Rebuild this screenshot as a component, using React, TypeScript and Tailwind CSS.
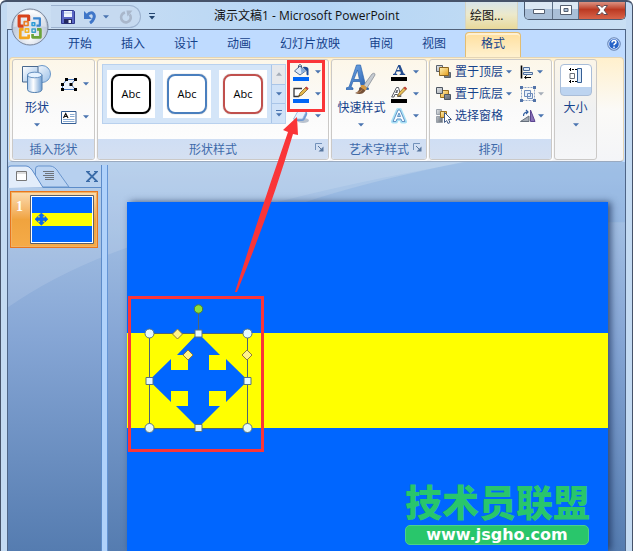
import { ReactNode } from "react";
import clsx from "clsx";

const TABS = ["开始", "插入", "设计", "动画", "幻灯片放映", "审阅", "视图"];

const STYLES = [
  { id: "black", border: "border-black" },
  { id: "blue", border: "border-[#4a7fbe]" },
  { id: "red", border: "border-[#c0504d]" },
];

const Caret = ({ dim = false }: { dim?: boolean }) => (
  <svg viewBox="0 0 6 4" className="h-1 w-1.5 shrink-0">
    <path d="M0 0.3h6L3 3.6z" fill={dim ? "#a5adb8" : "#4a74b0"} />
  </svg>
);

const OfficeLogo = () => (
  <svg viewBox="0 0 38 38" className="h-[38px] w-[38px]">
    <defs>
      <radialGradient id="orb" cx="50%" cy="78%" r="75%">
        <stop offset="0" stopColor="#ffffff" />
        <stop offset="0.45" stopColor="#d3dbe8" />
        <stop offset="0.8" stopColor="#b3bfd1" />
        <stop offset="1" stopColor="#f3f6fa" />
      </radialGradient>
      <linearGradient id="orbTop" x1="0" y1="0" x2="0" y2="1">
        <stop offset="0" stopColor="#ffffff" />
        <stop offset="1" stopColor="#e3e8f0" stopOpacity="0.6" />
      </linearGradient>
    </defs>
    <circle cx="19" cy="19" r="18" fill="url(#orb)" stroke="#76839a" />
    <path d="M2.5 19a16.500 16.500 0 0 1 33 0q-16 -3 -33 0z" fill="url(#orbTop)" />
    <g fill="none" strokeLinejoin="round" transform="translate(19 19) scale(1.12) translate(-18.7 -19.3)">
      <path d="M17.500 14V9.500h-8.500v9h4" stroke="#d8431c" strokeWidth="2.800" />
      <path d="M13.500 14.500h3.500v3.500h-3.500z" stroke="#ea7d24" strokeWidth="1.400" />
      <path d="M21.500 11.500h6v6.500h-3" stroke="#3c86cf" strokeWidth="2" />
      <path d="M20.500 15.500h2.500v2.500h-2.500z" stroke="#2b9bd7" strokeWidth="1.300" />
      <path d="M13 21.500h-3v7.500h7.500v-3" stroke="#f2a51d" strokeWidth="2.400" />
      <path d="M14.500 21h3v3h-3z" stroke="#f0b429" strokeWidth="1.400" />
      <path d="M25 21.500h3v7h-7v-3" stroke="#6ba43a" strokeWidth="2.400" />
      <path d="M20.500 21h3v3h-3z" stroke="#3fa0c9" strokeWidth="1.300" />
    </g>
  </svg>
);

const SaveIcon = () => (
  <svg viewBox="0 0 14 14" className="h-3.5 w-3.5">
    <path d="M0.500 0.500h12l1 1v12H0.500z" fill="#5a66c4" stroke="#31398f" />
    <path d="M3 1h8v6H3z" fill="#eef4fd" />
    <path d="M3 3h8" stroke="#b9cbe8" />
    <path d="M3 9h8v4.500H3z" fill="#23285f" />
    <path d="M7.500 10h2.500v3H7.500z" fill="#e6ebf7" />
  </svg>
);

const UndoIcon = () => (
  <svg viewBox="0 0 14 14" className="h-3.5 w-3.5">
    <path d="M4 5.500Q7 2 9.500 3 12.500 5 10.500 9 9.500 11.500 7 13" fill="none" stroke="#3f76c8" strokeWidth="3" />
    <path d="M1 1v8h8z" fill="#3f76c8" />
  </svg>
);

const RedoIcon = () => (
  <svg viewBox="0 0 14 14" className="h-3.5 w-3.5">
    <path d="M6 2.500C2 3.500 1 8 3.500 10.800s7 1.500 8-1.800c.6-2 0-3.500-1-4.500" fill="none" stroke="#a9b7cb" strokeWidth="2.600" />
    <path d="M7.500 0.500H13.500L8.500 6.500z" fill="#a9b7cb" />
  </svg>
);

const ShapesIcon = () => (
  <svg viewBox="0 0 30 30" className="h-[30px] w-[30px]">
    <defs>
      <linearGradient id="can" x1="0" x2="1">
        <stop offset="0" stopColor="#a5c6ea" />
        <stop offset="0.4" stopColor="#ffffff" />
        <stop offset="1" stopColor="#6f9fd3" />
      </linearGradient>
      <linearGradient id="sheet" x1="0" y1="0" x2="1" y2="1">
        <stop offset="0" stopColor="#ffffff" />
        <stop offset="1" stopColor="#99bfe8" />
      </linearGradient>
    </defs>
    <circle cx="20" cy="10" r="8.500" fill="url(#sheet)" stroke="#6a97c9" />
    <path d="M0.500 2.500h15.500v15.500H0.500z" fill="url(#sheet)" stroke="#49698f" />
    <path d="M5.500 11v14.500c0 4 14.500 4 14.500 0V11z" fill="url(#can)" stroke="#527fae" />
    <ellipse cx="12.750" cy="11" rx="7.250" ry="2.800" fill="#e5f2ff" stroke="#6590c0" />
  </svg>
);

const EditPointsIcon = () => (
  <svg viewBox="0 0 16 13" className="h-[13px] w-4">
    <path d="M6 1.500h8.500L10 6.500l4.500 5H1.500V6.500z" fill="#edf4fd" stroke="#4a76b8" />
    <path d="M4 0h3v3H4zM13 0h3v3h-3zM8.500 5h3v3h-3zM0 5h3v3H0zM0 10h3v3H0zM13 10h3v3h-3z" fill="#000" />
  </svg>
);

const TextBoxIcon = () => (
  <svg viewBox="0 0 16 13" className="h-[13px] w-4">
    <path d="M0.500 0.500h14.500v12H0.500z" fill="#fff" stroke="#355f96" />
    <path d="M9 3.500h4.500M9 5.500h4.500M2 8.500h11.500M2 10.500h11.500" stroke="#89aad1" />
    <path d="M2.500 7L4.700 2.500 7 7M3.500 5.500h2.500" fill="none" stroke="#111" strokeWidth="1.200" />
  </svg>
);

const FillIcon = () => (
  <svg viewBox="0 0 16 17" className="h-[17px] w-4">
    <path d="M1.500 7L7 2l5.500 5L7 11z" fill="#dceafa" stroke="#516f96" />
    <path d="M5.500 4V1.500Q7-.5 8.500 1.500v5" fill="none" stroke="#475a77" />
    <path d="M7.500 3l5 4L8.500 9.500z" fill="#89aeda" />
    <path d="M9.500 3q6-1 6 2.500v5.500q-2 1-2-1V7z" fill="#1d4b93" />
    <path d="M0 13h16v4H0z" fill="#0066f5" />
  </svg>
);

const OutlineIcon = () => (
  <svg viewBox="0 0 16 17" className="h-[17px] w-4">
    <path d="M9 2.500H1v8h5" fill="#fff" stroke="#33363c" strokeWidth="1.300" />
    <path d="M5.500 10.500L7 7l6-6 2 2-6 6z" fill="#e4b84b" stroke="#80622a" strokeWidth="0.800" />
    <path d="M12 2l1.500-1.500 2.200 2L14.200 4z" fill="#c4423b" />
    <path d="M5.500 10.500l.6-1.600 1.200 1z" fill="#222" />
    <path d="M0 13h16v4H0z" fill="#0066f5" />
  </svg>
);

const EffectsIcon = () => (
  <svg viewBox="0 0 16 16" className="h-4 w-4">
    <ellipse cx="10" cy="12.500" rx="6" ry="2.500" fill="#bac3cf" />
    <path d="M5 3h7q3 1 2 4l-2 4q-1 2-3 2H1.500L0.500 11z" fill="#6f9ad3" />
    <path d="M5 3h6q2 0 1.500 2L9.500 11H0.500z" fill="#e8f2ff" stroke="#9cb7dc" strokeWidth="0.800" />
  </svg>
);

const QuickStyleIcon = () => (
  <svg viewBox="0 0 30 32" className="h-8 w-[30px]">
    <defs>
      <linearGradient id="bigA" x1="0" y1="0" x2="1" y2="1">
        <stop offset="0" stopColor="#79b1ef" />
        <stop offset="1" stopColor="#2359a8" />
      </linearGradient>
    </defs>
    <path d="M0 24l3-1L10.500 1h4L20 23l2.500 1v1.500h-9V24l2-1-1.500-5.500h-7L5 23l2 1v1.500H0zM7.800 15.500h5.600L11.500 6z" fill="url(#bigA)" fillRule="evenodd" stroke="#2c64ac" strokeWidth="0.700" />
    <path d="M17.500 21.500L26 10q3-2 3 1l-8 13z" fill="#c6cbd1" stroke="#7c848e" strokeWidth="0.700" />
    <path d="M15 21l3 0 3 3-1.500 2.500-5-2z" fill="#d69a45" />
    <path d="M9 29q4-1 5-6l5.500 3.500Q16 32 9 29z" fill="#755037" />
    <path d="M11 28.500q4 0 5-3" stroke="#b5855d" fill="none" />
  </svg>
);

const TextFillIcon = () => (
  <svg viewBox="0 0 16 17" className="h-[17px] w-4">
    <path d="M2 11v-1l1.500-.5L7.300 1h2l3.500 8.500 1.400.5v1H8.700v-1l1.300-.5-.7-2H5.600l-.8 2 1.400.5v1zM6 6h2.700L7.400 2.800z" fill="#244d8f" fillRule="evenodd" />
    <path d="M0 13h16v4H0z" fill="#000" />
  </svg>
);

const TextOutlineIcon = () => (
  <svg viewBox="0 0 16 17" className="h-[17px] w-4">
    <path d="M0.700 11L5.500 1.500h2L10 10.500H7l-.5-2H3.800L3 11zM4.700 6.500h1.500V4z" fill="#fff" stroke="#4a4d55" strokeWidth="0.900" />
    <path d="M6.500 10.500L8 7l5.500-6 2 2L9.500 9z" fill="#e8bf58" stroke="#80622a" strokeWidth="0.800" />
    <path d="M12.500 2L14 0.500l2 2L14.500 4z" fill="#c4423b" />
    <path d="M0 13h16v4H0z" fill="#000" />
  </svg>
);

const TextEffectsIcon = () => (
  <svg viewBox="0 0 16 16" className="h-4 w-4">
    <path d="M2 13.500L7 2h2l5 11.500h-3L10 11H6l-1 2.500zM6.500 8.500h3L8 5z" fill="none" stroke="#a8e0f5" strokeWidth="4" strokeLinejoin="round" />
    <path d="M2 13.500L7 2h2l5 11.500h-3L10 11H6l-1 2.500zM6.500 8.500h3L8 5z" fill="#f8fcff" stroke="#6493c6" fillRule="evenodd" />
  </svg>
);

const LayerIcon = ({ kind }: { kind: "front" | "back" | "pane" }) => (
  <svg viewBox="0 0 16 16" className="h-4 w-4">
    <defs>
      <linearGradient id="gold" x1="0" y1="0" x2="1" y2="1">
        <stop offset="0" stopColor="#fff3b8" />
        <stop offset="1" stopColor="#e59d19" />
      </linearGradient>
      <linearGradient id="steel" x1="0" y1="0" x2="1" y2="1">
        <stop offset="0" stopColor="#e4e7ea" />
        <stop offset="1" stopColor="#5e6670" />
      </linearGradient>
    </defs>
    {kind === "front" && (
      <>
        <path d="M0.500 1.500h6v6h-6zM8.500 8.500h6v5h-6z" fill="url(#steel)" stroke="#5a626d" />
        <path d="M3.500 3.500h9v8h-9z" fill="url(#gold)" stroke="#8a6420" />
      </>
    )}
    {kind === "back" && (
      <>
        <path d="M4.500 4.500h8v7h-8z" fill="url(#gold)" stroke="#9a7020" />
        <path d="M0.500 1.500h6v6h-6zM8.500 8.500h6v5h-6z" fill="url(#steel)" stroke="#4e5661" />
      </>
    )}
    {kind === "pane" && (
      <>
        <path d="M0.500 1.500h5v5h-5zM0.500 8.500h6v6h-6z" fill="url(#steel)" stroke="#9aa1aa" />
        <path d="M4.500 3.500h6v6h-6z" fill="url(#gold)" stroke="#9a7020" />
        <path d="M8.500 4.500v10l2.200-2 1.300 3 2-1-1.500-3h3z" fill="#fff" stroke="#405a86" />
      </>
    )}
  </svg>
);

const AlignIcon = () => (
  <svg viewBox="0 0 15 14" className="h-3.5 w-[15px]">
    <path d="M1.500 0.500v13" stroke="#000" strokeWidth="1.600" />
    <path d="M3.500 2.500h6v3h-6zM3.500 7.500h9v2h-9z" fill="#dce9f8" stroke="#4f6f9c" />
    <path d="M5 12.500h6M6.500 10.500l-2 2 2 1.500" stroke="#000" fill="none" />
  </svg>
);

const GroupIcon = () => (
  <svg viewBox="0 0 16 16" className="h-4 w-4">
    <path d="M1.500 1.500h13v13h-13z" fill="none" stroke="#8ca3c7" strokeDasharray="2 1" />
    <path d="M4.500 4.500h6v6h-6zM7.500 7.500h5v5h-5z" fill="#e6eef9" stroke="#6d8bb9" />
    <path d="M0 0h3v3H0zM13 0h3v3h-3zM0 13h3v3H0zM13 13h3v3h-3z" fill="#5273a8" />
  </svg>
);

const RotateIcon = () => (
  <svg viewBox="0 0 16 14" className="h-3.5 w-4">
    <path d="M0.500 12.500h8.500V7z" fill="#a4abb5" stroke="#66707d" />
    <path d="M10.500 1v11.500H15z" fill="#8a72b8" stroke="#5c4591" />
    <path d="M3.500 7q0-4 4-4M6 1l2 2-2 2" fill="none" stroke="#315ea0" strokeWidth="1.200" />
  </svg>
);

const SizeIcon = () => (
  <svg viewBox="0 0 16 16" className="h-4 w-4">
    <path d="M1 1.500h8M1 13.500h8" stroke="#000" strokeDasharray="2 1" />
    <path d="M2.500 0v3M2.500 12v3" stroke="#000" />
    <path d="M2 5.500h4.500v5H2z" fill="#fff" stroke="#686f79" />
    <path d="M9.500 0.500h4v14h-4z" fill="#d9e9fa" stroke="#365f94" />
  </svg>
);

const Launcher = () => (
  <button aria-label="对话框启动器" className="absolute right-1 bottom-[7px]">
    <svg viewBox="0 0 9 9" className="h-[9px] w-[9px]">
      <path d="M0.500 7V0.500H7" fill="none" stroke="#7291ba" />
      <path d="M3 3l4 4" stroke="#58779f" />
      <path d="M8.500 3.500v5h-5z" fill="#58779f" />
    </svg>
  </button>
);

interface RibbonGroupProps {
  label: string;
  className: string;
  launcher?: boolean;
  children: ReactNode;
}

const RibbonGroup = ({ label, className, launcher, children }: RibbonGroupProps) => (
  <section className={clsx("relative flex h-[101px] shrink-0 flex-col rounded-[3px] border border-[#cbc9c7] bg-linear-to-b from-[#fdf7e9] via-[#fafafa] to-white shadow-[1px_1px_0_#fff]", className)}>
    <div className="flex flex-1">{children}</div>
    <h2 className="h-5 rounded-b-[2px] bg-linear-to-b from-[#cfdef4] to-[#d5e0f1] pt-px text-center text-xs leading-5 text-[#3e6aaa]">{label}</h2>
    {launcher && <Launcher />}
  </section>
);

const LargeButton = ({ icon, label }: { icon: ReactNode; label: string }) => (
  <button className="flex flex-col items-center pt-1 whitespace-nowrap">
    <span className="flex h-8 items-start">{icon}</span>
    <span className="mt-1 leading-4">{label}</span>
    <span className="mt-[7px] flex"><Caret /></span>
  </button>
);

const SmallButton = ({ icon, label, dim }: { icon: ReactNode; label: string; dim?: boolean }) => (
  <button aria-label={label} className="flex h-[22px] items-center gap-1.5">
    {icon}
    <Caret dim={dim} />
  </button>
);

const TitleBar = () => (
  <header className="relative flex h-[29px] items-start bg-linear-to-r from-[#cfe0f2] via-[#b4d5f5] to-[#c9dff3] pl-11">
    <div className="mt-[5px] flex h-[23px] w-[90px] items-center rounded-r-full border border-l-0 border-[#9cb2cf] bg-[#c6daf0] pl-2.5">
      <button aria-label="保存"><SaveIcon /></button>
      <button aria-label="撤消" className="ml-2"><UndoIcon /></button>
      <button aria-label="撤消选项" className="ml-1.5 flex"><Caret /></button>
      <button aria-label="重复" className="ml-2.5"><RedoIcon /></button>
    </div>
    <button aria-label="自定义快速访问工具栏" className="mt-[13px] ml-2">
      <svg viewBox="0 0 6 7" className="h-[7px] w-1.5">
        <path d="M0 0.500h6" stroke="#24466f" />
        <path d="M0 3h6L3 6.500z" fill="#24466f" />
      </svg>
    </button>
    <h1 className="flex-1 pt-2 pr-2 pl-[59px] text-xs leading-4 whitespace-nowrap text-[#111]">演示文稿1 - Microsoft PowerPoint</h1>
    <div className="mr-1.5 h-[29px] w-[53px] border-x border-[#d5d4c4] bg-linear-to-b from-[#d5e4ee] via-[#ece9cb] to-[#e9d99a] pt-2 pl-1 text-xs leading-4 text-[#111]">绘图...</div>
    <div className="flex h-5 overflow-hidden rounded-b-[5px] border border-t-0 border-[#4a5a70]">
      <button aria-label="最小化" className="flex w-7 items-center justify-center border-r border-[#5d6f86] bg-linear-to-b from-[#dce8f4] from-50% to-[#a9bfd8] to-50%">
        <svg viewBox="0 0 12 5" className="mt-1 h-[5px] w-3"><path d="M0.500 0.500h11v4H0.500z" fill="#fff" stroke="#555f70" /></svg>
      </button>
      <button aria-label="最大化" className="flex w-[26px] items-center justify-center border-r border-[#5d6f86] bg-linear-to-b from-[#dce8f4] from-50% to-[#a9bfd8] to-50%">
        <svg viewBox="0 0 12 10" className="h-2.5 w-3"><path d="M0.500 0.500h11v9H0.500zM4 3.500h4v3H4z" fill="#fff" fillRule="evenodd" stroke="#555f70" /></svg>
      </button>
      <button aria-label="关闭" className="flex w-[46px] items-center justify-center bg-linear-to-b from-[#e2a79a] via-[#bb3922] to-[#d8644a]">
        <svg viewBox="0 0 12 10" className="h-2.5 w-3"><path d="M0.500 0.500h3.500l2 2 2-2h3.500L8 5l3.500 4.500H8l-2-2-2 2H0.500L4 5z" fill="#fff" stroke="#614b52" /></svg>
      </button>
    </div>
    <button aria-label="Office 按钮" className="absolute top-2 left-1"><OfficeLogo /></button>
  </header>
);

const TabRow = () => (
  <nav className="flex h-7 items-end gap-px border-t border-[#52627a] bg-[#bfdbff] pl-[46px] text-xs leading-4 text-[#15428b]">
    {TABS.map((tab) => (
      <button key={tab} className="h-[25px] px-3.5 pt-0.5 pb-1 whitespace-nowrap">{tab}</button>
    ))}
    <button className="ml-1 h-[25px] rounded-t-[4px] border border-b-0 border-[#e3bd72] bg-linear-to-b from-[#ffdf9d] to-[#fff1cf] px-[15px] pt-0.5 pb-1 whitespace-nowrap shadow-[inset_0_2px_0_#fff0d1]">格式</button>
    <button aria-label="帮助" className="mr-1 mb-1.5 ml-auto">
      <svg viewBox="0 0 14 14" className="h-3.5 w-3.5">
        <circle cx="7" cy="7" r="6.300" fill="#2763c8" stroke="#7b93b9" strokeWidth="1" />
        <circle cx="7" cy="7" r="5.300" fill="none" stroke="#e8f1ff" strokeWidth="0.900" />
        <path d="M5 5.600q0-2 2-2t2 1.600q0 1-1.100 1.500Q7 7.200 7 8.300M7 9.400v1.500" fill="none" stroke="#fff" strokeWidth="1.500" />
      </svg>
    </button>
  </nav>
);

const Ribbon = () => (
  <div className="bg-[#bfdbff] px-px">
    <div className="flex h-[105px] gap-0.5 rounded-[4px] border border-[#e5d5b5] border-b-[#9aaac0] bg-linear-to-b from-[#fff0cd] via-[#fbfaf7] to-[#f4f5f8] px-0.5 pt-px text-xs text-[#15428b]">
      <RibbonGroup label="插入形状" className="w-[83px]">
        <div className="flex w-12 justify-center"><LargeButton icon={<ShapesIcon />} label="形状" /></div>
        <div className="flex flex-col gap-[11px] pt-[13px]">
          <SmallButton icon={<EditPointsIcon />} label="编辑形状" />
          <SmallButton icon={<TextBoxIcon />} label="文本框" />
        </div>
      </RibbonGroup>

      <RibbonGroup label="形状样式" className="w-[232px]" launcher>
        <div className="mt-1 ml-1 flex h-[60px] border border-[#b9d1ee] bg-[#d4e5f8]">
          <div className="flex gap-2 px-1 pt-[5px]">
            {STYLES.map((s) => (
              <button key={s.id} className="flex h-12 w-12 items-center justify-center bg-white">
                <span className={clsx("flex h-10 w-10 items-center justify-center rounded-lg border-2 text-[11px] text-black shadow-[0_0_1px_#777]", s.border)}>Abc</span>
              </button>
            ))}
          </div>
          <div className="flex w-3.5 flex-col divide-y divide-[#a9c5e8] border-l border-[#a9c5e8]">
            <button aria-label="上一行" className="flex flex-1 items-center justify-center bg-[#e6e8ec]">
              <svg viewBox="0 0 6 4" className="h-1 w-1.5"><path d="M0 3.700h6L3 0.300z" fill="#a5adb8" /></svg>
            </button>
            <button aria-label="下一行" className="flex flex-1 items-center justify-center bg-[#d0e2f8]"><Caret /></button>
            <button aria-label="其他" className="flex flex-1 flex-col items-center justify-center gap-0.5 bg-[#d0e2f8]">
              <span className="h-px w-1.5 bg-[#4a74b0]" />
              <Caret />
            </button>
          </div>
        </div>
        <div className="relative flex flex-col pt-px pl-[7px]">
          <SmallButton icon={<FillIcon />} label="形状填充" />
          <SmallButton icon={<OutlineIcon />} label="形状轮廓" />
          <SmallButton icon={<EffectsIcon />} label="形状效果" />
          <div className="pointer-events-none absolute top-0 left-px h-[52px] w-[38px] border-[3px] border-[#fa3538]" />
        </div>
      </RibbonGroup>

      <RibbonGroup label="艺术字样式" className="w-[96px]" launcher>
        <div className="flex w-[59px] justify-center"><LargeButton icon={<QuickStyleIcon />} label="快速样式" /></div>
        <div className="flex flex-col pt-px">
          <SmallButton icon={<TextFillIcon />} label="文本填充" />
          <SmallButton icon={<TextOutlineIcon />} label="文本轮廓" />
          <SmallButton icon={<TextEffectsIcon />} label="文本效果" />
        </div>
      </RibbonGroup>

      <RibbonGroup label="排列" className="w-[123px]">
        <div className="flex flex-col pt-px pl-1.5">
          <button className="flex h-[22px] items-center gap-[3px] whitespace-nowrap"><LayerIcon kind="front" />置于顶层<Caret /></button>
          <button className="flex h-[22px] items-center gap-[3px] whitespace-nowrap"><LayerIcon kind="back" />置于底层<Caret /></button>
          <button className="flex h-[22px] items-center gap-[3px] whitespace-nowrap"><LayerIcon kind="pane" />选择窗格</button>
        </div>
        <div className="flex flex-col pt-px pl-2">
          <button aria-label="对齐" className="flex h-[22px] items-center gap-0.5"><AlignIcon /><Caret /></button>
          <button aria-label="组合" className="flex h-[22px] items-center gap-0.5"><GroupIcon /><Caret dim /></button>
          <button aria-label="旋转" className="flex h-[22px] items-center gap-0.5"><RotateIcon /><Caret /></button>
        </div>
      </RibbonGroup>

      <section className="flex h-[101px] w-[43px] shrink-0 justify-center rounded-[3px] border border-[#cbc9c7] bg-linear-to-b from-[#fbf5e8] via-[#f0f1f2] to-[#f5f6f8]">
        <button className="flex flex-col items-center pt-1">
          <span className="flex h-8 w-8 justify-center rounded-[4px] border border-[#a9bdd8] bg-linear-to-b from-white from-72% to-[#bdd4f0] to-72% pt-[3px]"><SizeIcon /></span>
          <span className="mt-1 leading-4">大小</span>
          <span className="mt-[7px] flex"><Caret /></span>
        </button>
      </section>
    </div>
  </div>
);

const Arrows = () => (
  <path d="M49 0L71 22H60V37H77V26L99 47.500 77 69V58H60V73H71L49 95 27 73H39V58H22V69L0 47.500 22 26V37H39V22H28z" fill="#0066ff" />
);

const SlidePane = () => (
  <aside className="flex w-[94px] shrink-0 flex-col border-r border-[#5d8cc9]">
    <div className="flex h-[23px] items-center border-b border-[#5d8cc9] bg-[#b7d0ef]">
      <svg viewBox="0 0 68 23" className="h-[23px] w-[68px]">
        <path d="M27.500 22V4q0-3 3-3H42q5 0 9 7l10 14z" fill="#bcd4f2" stroke="#6995cd" />
        <path d="M0 23V3q0-2 3-2h15q4 0 8 7l9 14.500" fill="#e3edfa" stroke="#5d8cc9" />
        <path d="M8.500 6.500h10v9h-10z" fill="#fff" stroke="#777" />
        <path d="M9 8h9" stroke="#bbb" />
        <path d="M35 6.500h11M37 8.500h9M35 10.500h11M37 12.500h9M37 14.500h9" stroke="#6d737b" />
      </svg>
      <button aria-label="关闭" className="ml-2.5">
        <svg viewBox="0 0 12 11" className="h-[11px] w-3">
          <path d="M1 0.500l10 10M11 0.500l-10 10" stroke="#3a6ba8" strokeWidth="1.800" />
          <path d="M0 0.500h4M8 0.500h4M0 10.500h4M8 10.500h4" stroke="#3a6ba8" />
        </svg>
      </button>
    </div>
    <button aria-label="幻灯片 1" className="mr-[3px] ml-0.5 mt-[3px] flex h-[57px] items-start justify-between border border-[#e8761e] bg-linear-to-b from-[#fbdcae] via-[#f0a33e] to-[#f5ab48] p-[3px] shadow-[inset_0_0_0_1px_#f2b263]">
      <span className="pt-1 pl-0.5 font-['Liberation_Serif',serif] text-sm leading-4 font-bold text-white">1</span>
      <svg viewBox="0 0 64 49" className="h-[49px] w-16">
        <path d="M0.500 0.500h63v48h-63z" fill="#fff" stroke="#5a5f68" />
        <path d="M2 2h60v45H2z" fill="#0066ff" />
        <path d="M2 18h60v13H2z" fill="#ff0" />
        <g transform="translate(5 18) scale(0.130)" stroke="#1d62c9" strokeWidth="5"><Arrows /></g>
      </svg>
    </button>
  </aside>
);

const SelectedShape = () => (
  <svg viewBox="0 0 112 132" className="absolute top-[101px] left-4 h-[132px] w-28">
    <g transform="translate(6 30)">
      <Arrows />
      <path d="M0.500 0.500h98v95h-98zM49.500 0v-24" fill="none" stroke="#4e6673" />
      <circle cx="49.500" cy="-24" r="4.200" fill="#8ee036" stroke="#4a7b38" />
      <g fill="#e4f8fb" stroke="#57737f">
        <circle cx="0.500" cy="0.500" r="4.500" />
        <circle cx="98.500" cy="0.500" r="4.500" />
        <circle cx="0.500" cy="95" r="4.500" />
        <circle cx="98.500" cy="95" r="4.500" />
        <path d="M46 -3h7v7h-7zM46 91.500h7v7h-7zM-3 44.500h7v7h-7zM95 44.500h7v7h-7z" />
      </g>
      <g fill="#fff38a" stroke="#8c7a3c">
        <path d="M28.500 -4l5 5-5 5-5-5zM39 17l5 5-5 5-5-5zM98 17l5 5-5 5-5-5z" />
      </g>
    </g>
  </svg>
);

const Workspace = () => (
  <main className="relative flex flex-1 overflow-hidden bg-linear-to-b from-[#b0cbea] via-[#86a6d5] via-45% to-[#557cb0] pt-[3px]">
    <svg viewBox="0 0 617 388" preserveAspectRatio="none" className="absolute inset-0 h-full w-full">
      <path d="M0 0H460Q270 32 120 85 50 110 0 145z" fill="#fff" opacity="0.120" />
      <path d="M455 0H617V60H250Q300 32 455 0z" fill="#6f9edc" opacity="0.250" />
    </svg>
    <div className="relative flex flex-1">
      <SlidePane />
      <div className="w-[6px] shrink-0 border-r border-[#6595d5] bg-[#b0d2fb]" />
      <div className="flex flex-1 pt-[37px] pr-[17px] pl-[19px]">
        <div className="relative flex flex-1 flex-col bg-[#0066ff] shadow-[3px_0_7px_rgba(20,40,80,0.7)]">
          <div className="mt-[131px] h-[95px] bg-[#ffff00]" />
          <SelectedShape />
          <div className="absolute top-[94px] left-px h-[156px] w-[136px] border-[3px] border-[#fa3538]" />
          <div className="absolute right-[18px] bottom-1.5 flex flex-col">
            <span className="text-center font-['Noto_Sans_CJK_SC',sans-serif] text-[37px] leading-[48px] font-black text-[#29c66b]">技术员联盟</span>
            <a href="#site" className="w-46 rounded-[5px] border border-[#4bd08a] bg-[#29c66b] text-center font-['DejaVu_Sans',sans-serif] text-base leading-[18px] font-bold text-white">www.jsgho.com</a>
          </div>
        </div>
      </div>
    </div>
  </main>
);

const App = () => (
  <div className="relative flex h-screen flex-col overflow-hidden rounded-t-[6px] border-x border-t-2 border-[#46536a] bg-[#c3daf2] font-['Open_Sans','Noto_Sans_CJK_SC',sans-serif]">
    <div className="-mt-0.5 flex flex-1 flex-col px-1.5">
      <TitleBar />
      <div className="flex flex-1 flex-col border-x border-[#4e6587]">
        <TabRow />
        <Ribbon />
        <Workspace />
      </div>
    </div>
    <svg viewBox="0 0 70 180" className="pointer-events-none absolute top-[112px] left-[230px] h-[180px] w-[70px]">
      <path d="M66 3L67 21 62 20Q40 95 6 178L4 178Q30 95 57 18L52 16z" fill="#fa3538" />
    </svg>
  </div>
);

export default App;
